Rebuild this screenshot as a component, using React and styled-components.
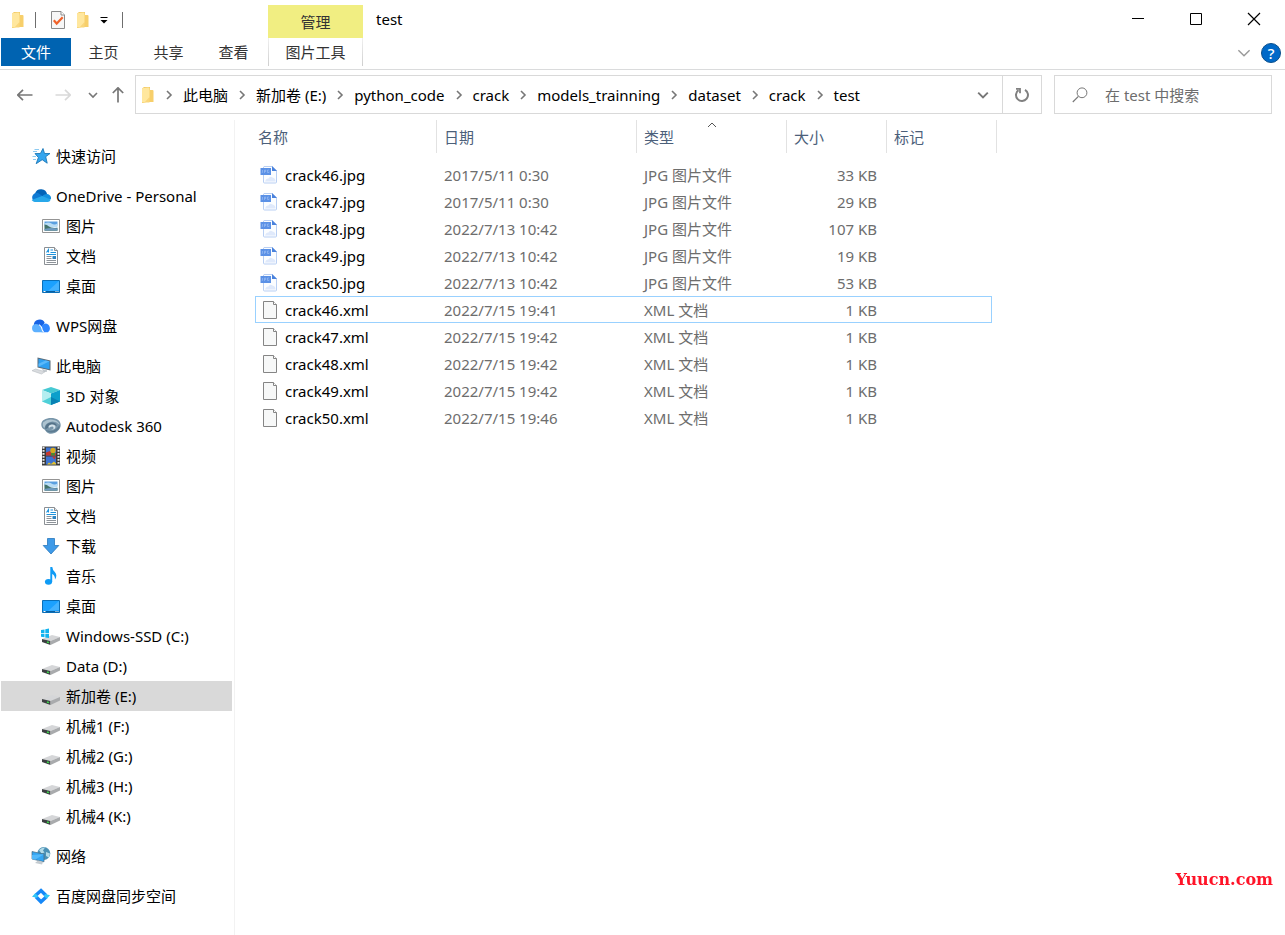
import React from "react";
import styled, { createGlobalStyle, css } from "styled-components";

const Global = createGlobalStyle`
  * { box-sizing: border-box; }
  body {
    margin: 0;
    background: #fff;
    color: #000;
    font: 15px/20px "Noto Sans", "Noto Sans CJK SC", sans-serif;
  }
  button, input { font: inherit; color: inherit; }
  button { border: 0; background: none; padding: 0; cursor: default; }
  a { color: inherit; text-decoration: none; cursor: default; }
  svg { display: block; flex: none; }
`;

/* ---------- icons ---------- */

const FolderIcon = () => (
  <svg width="14" height="18" viewBox="0 0 14 18">
    <path d="M1 2.5 3 1h6v12l-6 4H1z" fill="#f3cb66" />
    <path d="M7 4h4.500q1 0 1 1v11H6z" fill="#f7cf6b" />
    <path d="M1 2.200 7.200 1.500q1.300 0 1.300 1.200V11q0 1-.8 1.700L4.500 16.500H1.500L1 16z" fill="#ffe79e" />
    <path d="M8.500 11v5.500h-5z" fill="#f9d67b" />
  </svg>
);

const CheckDocIcon = () => (
  <svg width="16" height="20" viewBox="0 0 16 20">
    <path d="M1.500 1.500h9.500l3.500 3.500v13.500h-13z" fill="#f7f7f7" stroke="#8b8b8b" />
    <path d="M11 1.500V5h3.500" fill="#fff" stroke="#8b8b8b" />
    <path d="m3.800 10.200 2.900 3.300 6-6.300" fill="none" stroke="#f0622a" strokeWidth="2.200" />
  </svg>
);

const CustomizeIcon = () => (
  <svg width="8" height="8" viewBox="0 0 8 8">
    <path d="M.5 1.500h7" stroke="#000" />
    <path d="M.5 4h7L4 7.500z" fill="#000" />
  </svg>
);

const Chevron = ({ dir = "down", size = 10, color = "#777", weight = 1.600 }) => {
  const turn = { down: 0, right: -90, up: 180 }[dir];
  return (
    <svg width={size} height={size} viewBox="0 0 10 10">
      <path d="m1 3 4 4 4-4" transform={`rotate(${turn} 5 5)`} fill="none" stroke={color} strokeWidth={weight} />
    </svg>
  );
};

const Arrow = ({ dir, color }) => (
  <svg width="16" height="16" viewBox="0 0 16 16">
    <path
      d="M.8 8H15.500M6 2.800.8 8 6 13.200"
      transform={`rotate(${{ left: 0, right: 180, up: 90 }[dir]} 8 8)`}
      fill="none"
      stroke={color}
      strokeWidth="1.700"
    />
  </svg>
);

const RefreshIcon = () => (
  <svg width="18" height="18" viewBox="0 0 18 18">
    <path d="M12 3.800a6 6 0 1 1-6.500.3" fill="none" stroke="#808080" strokeWidth="2" />
    <path d="M3 2.800h4v4.400" fill="none" stroke="#808080" strokeWidth="1.800" />
  </svg>
);

const SearchIcon = () => (
  <svg width="16" height="16" viewBox="0 0 16 16">
    <circle cx="10" cy="5.800" r="4.900" fill="none" stroke="#777" />
    <path d="M6.400 9.400.8 15" stroke="#777" strokeWidth="1.200" />
  </svg>
);

const MinimizeIcon = () => (
  <svg width="14" height="14" viewBox="0 0 14 14"><path d="M1 6.500h12" stroke="#000" /></svg>
);
const MaximizeIcon = () => (
  <svg width="14" height="14" viewBox="0 0 14 14"><path d="M1.500 1.500h11v11h-11z" fill="none" stroke="#000" /></svg>
);
const CloseIcon = () => (
  <svg width="14" height="14" viewBox="0 0 14 14"><path d="m1 1 12 12M13 1 1 13" stroke="#000" strokeWidth="1.200" /></svg>
);

const StarIcon = () => (
  <svg width="20" height="20" viewBox="0 0 20 20">
    <path d="m12 2.500 1.500 5H19l-4.300 3.200 1.500 6.500-5-3.500-6 4 2.200-6.200L4 7.600l5.400-.1z" fill="#35a5ee" stroke="#1c78b8" strokeWidth=".9" />
    <path d="M3.500 3.500h4.500M2 5.500h4M1.500 10.500H5M2 13.500h3" stroke="#7fc4ef" strokeWidth=".9" />
  </svg>
);

const OneDriveIcon = () => (
  <svg width="20" height="20" viewBox="0 0 20 20">
    <path d="M4 7.500a6.300 6.300 0 0 1 12.200 1L11 12z" fill="#0364b8" />
    <path d="M4.600 16A4.600 4.600 0 1 1 7 7l6 4L5 16z" fill="#0f7ad3" />
    <path d="M10.500 11q2.500-3.500 5.700-3A4.300 4.300 0 0 1 20 13l-4 1z" fill="#1490df" />
    <path d="m.6 14 10.400-4 8.700 3.500A3.200 3.200 0 0 1 17 16H4.300Q2 16 .6 14z" fill="#28a8ea" />
  </svg>
);

const PictureIcon = () => (
  <svg width="20" height="20" viewBox="0 0 20 20">
    <path d="M1.500 3.500h17v13h-17z" fill="#fff" stroke="#949494" />
    <path d="M3.500 5.500h13v4h-13z" fill="#5b9fe0" />
    <path d="M3.500 7.500q4-2 7 0t6 0v4h-13z" fill="#b9dcf5" />
    <path d="M3.500 8.500q2.500 0 4.500 2t8.500 1.200v3h-13z" fill="#44736b" />
    <path d="M3.500 13q6-1.500 13-.5v2h-13z" fill="#6f9ac0" />
  </svg>
);

const DocumentIcon = () => (
  <svg width="20" height="20" viewBox="0 0 20 20">
    <path d="M3.500 1.500h10l3 3v14h-13z" fill="#fff" stroke="#8a8f94" />
    <path d="M13.500 1.500v3h3" fill="#dfe3e6" stroke="#8a8f94" />
    <path d="m5.500 6.500 2-3v3m2-2.500H12M9.500 6.500H15M5.500 8.500h9.500" stroke="#1f93dc" strokeWidth="1.100" fill="none" />
    <path d="M5.500 10.500h5M5.500 12.500h5M5.500 14.500H15M5.500 16.500H15" stroke="#8d9399" />
    <path d="M11.500 10h3.500v3h-3.500z" fill="#2f83c0" />
  </svg>
);

const DesktopIcon = () => (
  <svg width="20" height="20" viewBox="0 0 20 20">
    <path d="M1.500 4.500h17v12h-17z" fill="#1ba1ff" stroke="#0a6fb8" />
    <path d="M18 5v9L7 15z" fill="#43b2ff" />
    <path d="M2 15.500h16" stroke="#075e9f" />
    <path d="M2.500 15.500h2M14.500 15.500h1M16.500 15.500h1" stroke="#fff" />
  </svg>
);

const WpsCloudIcon = () => (
  <svg width="20" height="20" viewBox="1 1.500 17.500 17.500">
    <path d="M3.500 10A5 5 0 0 1 13 7.500L9 13z" fill="#1662e4" />
    <path d="M9.500 15.500q-1-6.500 4-7.500a4.300 4.300 0 0 1 2.200 7.800h-4z" fill="#2f86ff" />
    <path d="M5 8.500q3.500 0 4.500 2.500l2.500 4.800H5A3.700 3.700 0 0 1 5 8.500z" fill="#5cb0ff" />
    <path d="M8.200 9q2 1.500 2.600 4.500l1.200 2.300" stroke="#fff" strokeWidth=".9" fill="none" />
  </svg>
);

const ComputerIcon = () => (
  <svg width="20" height="20" viewBox="0 0 20 20">
    <path d="m6.500 1.500 13 3v10l-13-3z" fill="#5b6b78" />
    <path d="m7.500 2.700 11 2.600v7.900l-11-2.500z" fill="#2f9ff0" />
    <path d="m18.500 5.300-11 5.400v-3l7-3.300z" fill="#5bb9fa" />
    <path d="m11 13 5 1.200v1.600l-3.500.4z" fill="#c2c8cd" />
    <path d="M1 14.700 4.500 13l9.500 2.700L10.500 18z" fill="#d9dcdf" stroke="#b7bcc1" strokeWidth=".6" />
  </svg>
);

const CubeIcon = () => (
  <svg width="20" height="20" viewBox="0 0 20 20">
    <path d="m10 1 9 3-9 3.500L1 4z" fill="#47c9d3" />
    <path d="m1 4 9 3.500V19l-9-3.500z" fill="#b4eef0" />
    <path d="m19 4-9 3.500V19l9-3.500z" fill="#0c9fcb" />
    <path d="m1 15.500 9-4.500v8z" fill="#4fd0d8" />
    <path d="m10 11 9 4.500L10 19z" fill="#0882b4" />
  </svg>
);

const AutodeskIcon = () => (
  <svg width="20" height="20" viewBox="0 0 20 20">
    <path d="M.3 9C0 4 5 2 10 2c5.500 0 9.700 2.500 9.700 7S15 17.800 10 17.800C6 17.800 5 15 3.500 13.500 1.500 12.500.5 11 .3 9z" fill="#7896aa" />
    <path d="M2 6.500Q7 2 14 4.200q4 1.500 4.500 4.500Q14 4.500 9 6q-5 1.500-5.500 6Q1 10 2 6.500z" fill="#adc3d0" />
    <path d="M4 12.500Q4.500 7 10.500 6.500q5 0 5.500 3.800-2-2.300-5.500-1.800Q7 9 7.500 11.500L5 13z" fill="#557389" />
    <path d="M7.500 11Q8 8.500 11 8.500q3.500 0 3.500 2.500T10 13.800q3-.5 2.500-2.200T9.500 11t-1 2z" fill="#d4e2ea" />
    <path d="M4 13.500q6 3 11-.5l4-4q0 7-8.500 7.500Q6 16.500 4 13.500z" fill="#5d7c92" />
  </svg>
);

const VideoIcon = () => (
  <svg width="20" height="20" viewBox="0 0 20 20">
    <path d="M1 .5h18v19H1z" fill="#3a3a3a" />
    <path d="M2.500 1v18M17.500 1v18" stroke="#e8e8e8" strokeWidth="2" strokeDasharray="1.800 1.200" />
    <path d="M5 1.500h10v8H5zM5 10.500h10v8H5z" fill="#3c72d0" />
    <path d="M5 6.500 9 5l2 3 4-1v2.500H5z" fill="#c8372a" />
    <circle cx="12" cy="4.500" r="2.700" fill="#d6a91f" />
    <path d="M10 7h4v2.500h-4z" fill="#4c8a32" />
    <path d="M11 10.500h4l-1.500 3z" fill="#c8372a" />
    <path d="m6 18.500 2-2 2 1.500 3-2.500 2 2v1z" fill="#e5c22c" />
  </svg>
);

const DownloadIcon = () => (
  <svg width="20" height="20" viewBox="0 0 20 20">
    <path d="M6.500 2.500h7v7h4.300L10 18 2.200 9.500h4.300z" fill="#3e9ae8" stroke="#2777bd" strokeWidth=".8" />
  </svg>
);

const MusicIcon = () => (
  <svg width="20" height="20" viewBox="0 0 20 20">
    <ellipse cx="7.500" cy="15.800" rx="3.600" ry="2.900" fill="#0f9bf5" />
    <path d="M9.300 1h2q.2 3 2.500 5 3 3.200.2 7.500 0-4.500-2.800-5.500v8H9.300z" fill="#0f9bf5" />
  </svg>
);

const DriveIcon = ({ system }) => (
  <svg width="20" height="20" viewBox="0 0 20 20">
    <path d="m1 13 10-4 8 2-9.500 4z" fill="#d5d6d8" />
    <path d="m1 13 8.500 2v4L1 16z" fill="#3c3f41" />
    <path d="m9.500 15 9.500-4v3.500L9.500 19z" fill="#a9abad" />
    <path d="m6 16 2 .7" stroke="#3ddc4b" strokeWidth="1.400" />
    {system && (
      <path d="m0 4 3.500-.6V7H0zM4.300 3.200 8 2.600V7H4.300zM0 7.800h3.500v3.500L0 10.800zM4.300 7.800H8v4.100l-3.700-.5z" fill="#12b3ef" />
    )}
  </svg>
);

const NetworkIcon = () => (
  <svg width="20" height="20" viewBox="0 0 20 20">
    <circle cx="12.800" cy="7.500" r="6.500" fill="#4b91b5" />
    <path d="M8 4q3-3 6-2.500l-2 3 1.500 2-3 1zM15 6l4 1.500-1 4-3-1.500z" fill="#b3dbe8" />
    <path d="m1 5.500 12 2.700v7.600L1 13z" fill="#33a5f2" stroke="#47697e" strokeWidth=".7" />
    <path d="m13 8.200-9 5.500L1 13V9z" fill="#52b9fb" />
    <path d="m4 17 3-2.500 5 1.500-1 2.500z" fill="#c4cbd0" />
  </svg>
);

const BaiduSyncIcon = () => (
  <svg width="20" height="20" viewBox="0 0 20 20">
    <path d="m4.500 9.500 5.500-5 5 5" fill="none" stroke="#1688f8" strokeWidth="3.400" />
    <path d="m5 10.800 5 5 5.500-5" fill="none" stroke="#1688f8" strokeWidth="3.400" />
    <path d="m1 10.800 3.300-3.600 3 3-1.500 1.500z" fill="#31c6f7" />
    <path d="m19 9.200-3.300 3.600-3-3L14.500 8z" fill="#31c6f7" />
  </svg>
);

const JpgIcon = () => (
  <svg width="18" height="20" viewBox="0 0 18 20">
    <path d="M4 1.500h8l4.500 4v11.500q0 1-1 1H4.500q-1 0-1-1V2z" fill="#fbfdff" stroke="#b9cff3" />
    <path d="M12 1v5h5z" fill="#4a82dc" />
    <path d="M5 16.500q1-3.500 3.500-3 1.500-3 4-1 3 .5 3 4z" fill="#dfe9fb" />
    <path d="M.5 3H11v7H.5z" fill="#5b91e6" />
    <path d="M2.500 5v2.500H1.800M4.500 8V5h1.200v1.500H4.500M9 5H7.500v2.500H9V6.500" fill="none" stroke="#a3c2f5" strokeWidth=".6" />
  </svg>
);

const BlankFileIcon = () => (
  <svg width="18" height="20" viewBox="0 0 18 20">
    <path d="M3.500 1.500h10l3 3v14h-13z" fill="#f7f8f8" stroke="#858585" />
    <path d="M13.500 1.500v3h3" fill="#fff" stroke="#858585" />
  </svg>
);

/* ---------- window frame ---------- */

const Window = styled.div`
  min-height: 100vh;
  display: flex;
  flex-direction: column;
`;

const TitleBar = styled.header`
  display: flex;
  height: 38px;
`;

const QuickAccess = styled.div`
  display: flex;
  align-items: center;
  gap: 10px;
  width: 268px;
  padding: 2px 0 0 11px;
`;

const ToolGroup = styled.div`
  display: flex;
  align-items: center;
  gap: 10px;
  padding: 0 4px;
`;

const Separator = styled.span`
  width: 1px;
  height: 16px;
  background: #6e6e6e;
`;

const IconButton = styled.button`
  display: flex;
  align-items: center;
  justify-content: center;
`;

const ContextLabel = styled.div`
  align-self: flex-end;
  width: 95px;
  height: 33px;
  background: #f1ee82;
  color: #333;
  line-height: 34px;
  text-align: center;
`;

const WindowTitle = styled.h1`
  flex: 1;
  margin: 0;
  padding-left: 13px;
  font-size: 15px;
  font-weight: 400;
  line-height: 38px;
`;

const WindowControls = styled.div`
  display: flex;
  padding-right: 2px;
`;

const ControlButton = styled(IconButton)`
  width: 58px;
`;

const Ribbon = styled.nav`
  display: flex;
  height: 32px;
  padding-left: 1px;
  border-bottom: 1px solid #dadbdc;
`;

const Tab = styled.button`
  width: 65px;
  height: 28px;
  color: #333;
  line-height: 28px;
  ${(p) => p.$file && css`
    width: 70px;
    background: #0063b1;
    color: #fff;
  `}
  ${(p) => p.$context && css`
    width: 95px;
    margin-left: 2px;
    background:
      linear-gradient(#f0f0f0, #cfcfcf) left / 1px 100% no-repeat,
      linear-gradient(#f0f0f0, #cfcfcf) right / 1px 100% no-repeat;
  `}
`;

const RibbonEnd = styled.div`
  display: flex;
  align-items: center;
  gap: 10px;
  margin-left: auto;
  padding: 0 4px 1px 0;
`;

const HelpButton = styled.button`
  width: 20px;
  height: 20px;
  border-radius: 50%;
  border: 1px solid #0a4f8c;
  background: #0069c8;
  color: #fff;
  font-weight: 500;
  line-height: 18px;
`;

/* ---------- address bar ---------- */

const AddressRow = styled.div`
  display: flex;
  align-items: center;
  height: 50px;
  padding: 0 13px 1px 0;
`;

const History = styled.div`
  display: flex;
  align-items: center;
  width: 135px;
  padding-left: 17px;
  gap: 12px;
`;

const Forward = styled(IconButton)`
  margin: 0 5px 0 10px;
`;

const AddressBox = styled.div`
  display: flex;
  flex: 1;
  height: 39px;
  min-width: 0;
  border: 1px solid #d9d9d9;
`;

const Crumbs = styled.nav`
  display: flex;
  align-items: center;
  flex: 1;
  min-width: 0;
  padding-left: 5px;
  white-space: nowrap;
`;

const CrumbArrow = styled.span`
  display: flex;
  justify-content: center;
  width: 28px;
`;

const DropButton = styled(IconButton)`
  width: 38px;
`;

const RefreshButton = styled(IconButton)`
  width: 39px;
  border-left: 1px solid #d9d9d9;
`;

const SearchBox = styled.label`
  display: flex;
  align-items: center;
  gap: 17px;
  width: 218px;
  height: 39px;
  margin-left: 12px;
  padding-left: 17px;
  border: 1px solid #d9d9d9;
`;

const SearchInput = styled.input`
  flex: 1;
  min-width: 0;
  padding: 0;
  border: 0;
  outline: 0;
  background: none;
  &::placeholder { color: #6d6d6d; opacity: 1; }
`;

/* ---------- body ---------- */

const Body = styled.div`
  display: flex;
  flex: 1;
`;

const Sidebar = styled.nav`
  display: flex;
  flex-direction: column;
  gap: 10px;
  width: 235px;
  padding: 21px 2px 24px 1px;
  border-right: 1px solid #f2f2f2;
`;

const TreeItem = styled.a`
  display: flex;
  align-items: center;
  gap: 5px;
  height: 30px;
  padding-left: ${(p) => (p.$child ? 40 : 30)}px;
  background: ${(p) => (p.$selected ? "#d9d9d9" : "none")};
  white-space: nowrap;
`;

const Files = styled.main`
  flex: 1;
  padding: 0 20px;
`;

const FileTable = styled.table`
  width: 742px;
  table-layout: fixed;
  border-collapse: separate;
  border-spacing: 0;
`;

const HeadCell = styled.th`
  position: relative;
  height: 33px;
  padding: 0 0 0 ${(p) => (p.$first ? 3 : 7)}px;
  border-right: 1px solid #e2e2e2;
  color: #4c607a;
  font-weight: 400;
  text-align: left;
`;

const SortMark = styled.span`
  position: absolute;
  top: 0;
  left: 0;
  right: 0;
  display: flex;
  justify-content: center;
`;

const Gap = styled.td`
  height: 8px;
  padding: 0;
`;

const Cell = styled.td`
  height: 27px;
  padding: 0 10px 0 7px;
  border-width: 1px 0;
  border-style: solid;
  border-color: ${(p) => (p.$focused ? "#99d1ff" : "transparent")};
  color: #6d6d6d;
  line-height: 20px;
  text-align: ${(p) => (p.$right ? "right" : "left")};
  white-space: nowrap;
`;

const NameCell = styled(Cell)`
  padding-left: 5px;
  color: #000;
  box-shadow: ${(p) => (p.$focused ? "inset 1px 0 #99d1ff" : "none")};
`;

const TagCell = styled(Cell)`
  box-shadow: ${(p) => (p.$focused ? "inset -1px 0 #99d1ff" : "none")};
`;

const FileName = styled.span`
  display: flex;
  align-items: center;
  gap: 7px;
`;

const Watermark = styled.footer`
  position: fixed;
  right: 12px;
  bottom: 45px;
  color: #ff1428;
  font: bold 16px/20px "DejaVu Serif", serif;
`;

/* ---------- data ---------- */

const crumbs = ["此电脑", "新加卷 (E:)", "python_code", "crack", "models_trainning", "dataset", "crack", "test"];

const tree = [
  [{ label: "快速访问", icon: <StarIcon /> }],
  [
    { label: "OneDrive - Personal", icon: <OneDriveIcon /> },
    { label: "图片", icon: <PictureIcon /> },
    { label: "文档", icon: <DocumentIcon /> },
    { label: "桌面", icon: <DesktopIcon /> },
  ],
  [{ label: "WPS网盘", icon: <WpsCloudIcon /> }],
  [
    { label: "此电脑", icon: <ComputerIcon /> },
    { label: "3D 对象", icon: <CubeIcon /> },
    { label: "Autodesk 360", icon: <AutodeskIcon /> },
    { label: "视频", icon: <VideoIcon /> },
    { label: "图片", icon: <PictureIcon /> },
    { label: "文档", icon: <DocumentIcon /> },
    { label: "下载", icon: <DownloadIcon /> },
    { label: "音乐", icon: <MusicIcon /> },
    { label: "桌面", icon: <DesktopIcon /> },
    { label: "Windows-SSD (C:)", icon: <DriveIcon system /> },
    { label: "Data (D:)", icon: <DriveIcon /> },
    { label: "新加卷 (E:)", icon: <DriveIcon />, selected: true },
    { label: "机械1 (F:)", icon: <DriveIcon /> },
    { label: "机械2 (G:)", icon: <DriveIcon /> },
    { label: "机械3 (H:)", icon: <DriveIcon /> },
    { label: "机械4 (K:)", icon: <DriveIcon /> },
  ],
  [{ label: "网络", icon: <NetworkIcon /> }],
  [{ label: "百度网盘同步空间", icon: <BaiduSyncIcon /> }],
];

const files = [
  ["crack46.jpg", "2017/5/11 0:30", "33 KB"],
  ["crack47.jpg", "2017/5/11 0:30", "29 KB"],
  ["crack48.jpg", "2022/7/13 10:42", "107 KB"],
  ["crack49.jpg", "2022/7/13 10:42", "19 KB"],
  ["crack50.jpg", "2022/7/13 10:42", "53 KB"],
  ["crack46.xml", "2022/7/15 19:41", "1 KB"],
  ["crack47.xml", "2022/7/15 19:42", "1 KB"],
  ["crack48.xml", "2022/7/15 19:42", "1 KB"],
  ["crack49.xml", "2022/7/15 19:42", "1 KB"],
  ["crack50.xml", "2022/7/15 19:46", "1 KB"],
];

export default function App() {
  return (
    <Window>
      <Global />
      <TitleBar>
        <QuickAccess>
          <FolderIcon />
          <Separator />
          <ToolGroup>
            <IconButton aria-label="属性"><CheckDocIcon /></IconButton>
            <IconButton aria-label="新建文件夹"><FolderIcon /></IconButton>
            <IconButton aria-label="自定义快速访问工具栏"><CustomizeIcon /></IconButton>
          </ToolGroup>
          <Separator />
        </QuickAccess>
        <ContextLabel>管理</ContextLabel>
        <WindowTitle>test</WindowTitle>
        <WindowControls>
          <ControlButton aria-label="最小化"><MinimizeIcon /></ControlButton>
          <ControlButton aria-label="最大化"><MaximizeIcon /></ControlButton>
          <ControlButton aria-label="关闭"><CloseIcon /></ControlButton>
        </WindowControls>
      </TitleBar>

      <Ribbon>
        <Tab $file>文件</Tab>
        <Tab>主页</Tab>
        <Tab>共享</Tab>
        <Tab>查看</Tab>
        <Tab $context>图片工具</Tab>
        <RibbonEnd>
          <IconButton aria-label="展开功能区"><Chevron size={14} color="#999" weight={1} /></IconButton>
          <HelpButton aria-label="帮助">?</HelpButton>
        </RibbonEnd>
      </Ribbon>

      <AddressRow>
        <History>
          <IconButton aria-label="后退"><Arrow dir="left" color="#777" /></IconButton>
          <Forward aria-label="前进" disabled><Arrow dir="right" color="#d9d9d9" /></Forward>
          <IconButton aria-label="最近浏览的位置"><Chevron /></IconButton>
          <IconButton aria-label="上移"><Arrow dir="up" color="#777" /></IconButton>
        </History>
        <AddressBox>
          <Crumbs>
            <FolderIcon />
            {crumbs.map((name, i) => (
              <React.Fragment key={i}>
                <CrumbArrow><Chevron dir="right" /></CrumbArrow>
                <a href="#">{name}</a>
              </React.Fragment>
            ))}
          </Crumbs>
          <DropButton aria-label="以前的位置"><Chevron size={12} /></DropButton>
          <RefreshButton aria-label="刷新"><RefreshIcon /></RefreshButton>
        </AddressBox>
        <SearchBox>
          <SearchIcon />
          <SearchInput type="text" aria-label="搜索" placeholder="在 test 中搜索" />
        </SearchBox>
      </AddressRow>

      <Body>
        <Sidebar>
          {tree.map((group) => (
            <div key={group[0].label}>
              {group.map((item, i) => (
                <TreeItem key={item.label} href="#" $child={i > 0} $selected={item.selected}>
                  {item.icon}
                  {item.label}
                </TreeItem>
              ))}
            </div>
          ))}
        </Sidebar>
        <Files>
          <FileTable>
            <colgroup>
              <col width="182" />
              <col width="200" />
              <col width="150" />
              <col width="100" />
              <col width="105" />
              <col width="5" />
            </colgroup>
            <thead>
              <tr>
                <HeadCell $first>名称</HeadCell>
                <HeadCell>日期</HeadCell>
                <HeadCell aria-sort="ascending">
                  类型
                  <SortMark><Chevron dir="up" color="#555" weight={1} /></SortMark>
                </HeadCell>
                <HeadCell>大小</HeadCell>
                <HeadCell colSpan={2}>标记</HeadCell>
              </tr>
            </thead>
            <tbody>
              <tr><Gap colSpan={6} /></tr>
              {files.map(([name, date, size]) => {
                const isImage = name.endsWith(".jpg");
                const focused = name === "crack46.xml";
                return (
                  <tr key={name}>
                    <NameCell $focused={focused}>
                      <FileName>
                        {isImage ? <JpgIcon /> : <BlankFileIcon />}
                        {name}
                      </FileName>
                    </NameCell>
                    <Cell $focused={focused}>{date}</Cell>
                    <Cell $focused={focused}>{isImage ? "JPG 图片文件" : "XML 文档"}</Cell>
                    <Cell $focused={focused} $right>{size}</Cell>
                    <TagCell $focused={focused} />
                    <Cell />
                  </tr>
                );
              })}
            </tbody>
          </FileTable>
        </Files>
      </Body>
      <Watermark>Yuucn.com</Watermark>
    </Window>
  );
}
